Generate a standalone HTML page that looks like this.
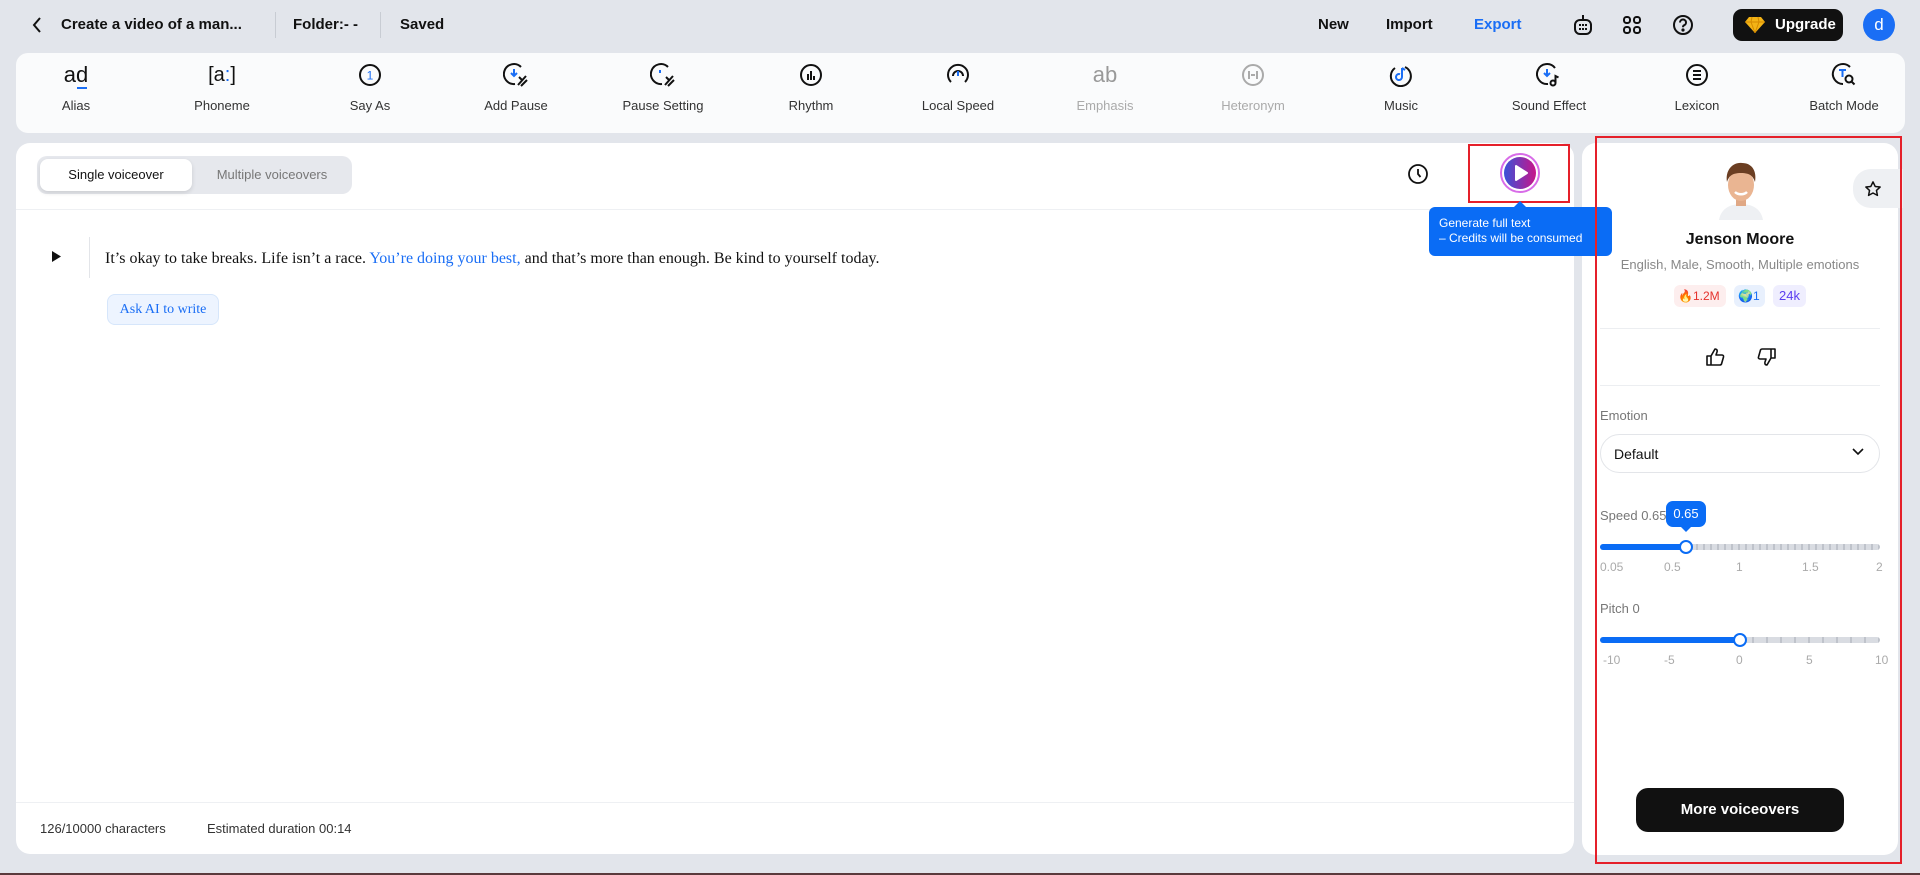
<!DOCTYPE html>
<html><head><meta charset="utf-8"><style>
*{box-sizing:border-box;margin:0;padding:0}
body{width:1920px;height:875px;background:#e2e5eb;font-family:"Liberation Sans",sans-serif;position:relative;overflow:hidden;color:#111}
.a{position:absolute}
.b{font-weight:bold}
.tool{position:absolute;top:62px;width:120px;margin-left:-60px;text-align:center}
.tool .ic{height:26px;display:flex;justify-content:center;align-items:center}
.tool .lb{font-size:13px;color:#333;margin-top:10px}
.tool.dis .lb{color:#aaa}
svg{display:block}
</style></head><body>
<!-- top bar -->
<svg class="a" style="left:31px;top:16px" width="12" height="18" viewBox="0 0 12 18"><path d="M9 2 L3 9 L9 16" fill="none" stroke="#111" stroke-width="2"/></svg>
<div class="a b" style="left:61px;top:16px;font-size:15px">Create a video of a man...</div>
<div class="a" style="left:275px;top:12px;width:1px;height:26px;background:#c8ccd3"></div>
<div class="a b" style="left:293px;top:16px;font-size:15px">Folder:- -</div>
<div class="a" style="left:380px;top:12px;width:1px;height:26px;background:#c8ccd3"></div>
<div class="a b" style="left:400px;top:16px;font-size:15px">Saved</div>
<div class="a b" style="left:1318px;top:16px;font-size:15px">New</div>
<div class="a b" style="left:1386px;top:16px;font-size:15px">Import</div>
<div class="a b" style="left:1474px;top:16px;font-size:15px;color:#1a6ef5">Export</div>
<svg class="a" style="left:1572px;top:13px" width="22" height="24" viewBox="0 0 22 24"><path d="M11 2v4" stroke="#111" stroke-width="2"/><rect x="3" y="7" width="16" height="14" rx="5" fill="none" stroke="#111" stroke-width="2"/><g fill="#111"><rect x="7" y="11" width="2" height="2"/><rect x="10" y="11" width="2" height="2"/><rect x="13" y="11" width="2" height="2"/><rect x="7" y="15" width="2" height="2"/><rect x="10" y="15" width="2" height="2"/><rect x="13" y="15" width="2" height="2"/></g></svg>
<svg class="a" style="left:1622px;top:15px" width="20" height="20" viewBox="0 0 20 20" fill="none" stroke="#111" stroke-width="2"><rect x="2" y="2" width="6" height="6" rx="2.5"/><rect x="12" y="2" width="6" height="6" rx="2.5"/><rect x="2" y="12" width="6" height="6" rx="2.5"/><rect x="12" y="12" width="6" height="6" rx="2.5"/></svg>
<svg class="a" style="left:1672px;top:14px" width="22" height="22" viewBox="0 0 22 22" fill="none" stroke="#111" stroke-width="2"><circle cx="11" cy="11" r="9"/><path d="M8 8.5a3 3 0 1 1 4 2.8c-.8.4-1 1-1 2"/><circle cx="11" cy="16" r=".6" fill="#111"/></svg>
<div class="a" style="left:1733px;top:9px;width:110px;height:32px;background:#111;border-radius:9px;color:#fff;font-size:15px;font-weight:bold;padding:7px 0 0 42px">Upgrade</div>
<svg class="a" style="left:1745px;top:16px" width="20" height="17" viewBox="0 0 20 17"><path d="M4 1h12l4 5-10 11L0 6z" fill="#f3b316"/><path d="M0 6h20M7 1l-1 5 4 11 4-11-1-5" fill="none" stroke="#d58a00" stroke-width="1"/></svg>
<div class="a" style="left:1863px;top:9px;width:32px;height:32px;border-radius:50%;background:#1a6ef5;color:#fff;font-size:17px;text-align:center;line-height:31px">d</div>

<!-- toolbar -->
<div class="a" style="left:16px;top:53px;width:1889px;height:80px;background:#fafbfc;border-radius:12px"></div>
<div class="tool" style="left:76px"><div class="ic"><span style="font-size:22px;position:relative">ad<span class="a" style="left:13px;top:25px;width:10px;height:2px;background:#1a6ef5"></span></span></div><div class="lb">Alias</div></div>
<div class="tool" style="left:222px"><div class="ic"><span style="font-size:20px">[a<span style="color:#1a6ef5">:</span>]</span></div><div class="lb">Phoneme</div></div>
<div class="tool" style="left:370px"><div class="ic"><svg width="24" height="24" viewBox="0 0 24 24"><circle cx="12" cy="12" r="10" fill="none" stroke="#111" stroke-width="2"/><text x="12" y="16.5" font-size="12" text-anchor="middle" fill="#1a6ef5" font-family="Liberation Sans">1</text></svg></div><div class="lb">Say As</div></div>
<div class="tool" style="left:516px"><div class="ic"><svg width="26" height="26" viewBox="0 0 26 26" fill="none" stroke="#111" stroke-width="2"><path d="M18 5A10 10 0 1 0 12 22"/><path d="M11 7v7M8 11l3 3 3-3" stroke="#1a6ef5"/><path d="M15 23l8-9M18 24l6-6M16 15l3 3"/></svg></div><div class="lb">Add Pause</div></div>
<div class="tool" style="left:663px"><div class="ic"><svg width="26" height="26" viewBox="0 0 26 26" fill="none" stroke="#111" stroke-width="2"><path d="M18 5A10 10 0 1 0 12 22"/><path d="M10 8v3" stroke="#1a6ef5"/><path d="M15 23l8-9M18 24l6-6M16 15l3 3"/></svg></div><div class="lb">Pause Setting</div></div>
<div class="tool" style="left:811px"><div class="ic"><svg width="24" height="24" viewBox="0 0 24 24" fill="none" stroke="#111" stroke-width="2"><circle cx="12" cy="12" r="10"/><path d="M9 11v6M12 8v9M15 13v4"/></svg></div><div class="lb">Rhythm</div></div>
<div class="tool" style="left:958px"><div class="ic"><svg width="24" height="24" viewBox="0 0 24 24" fill="none" stroke="#111" stroke-width="2"><path d="M5 19A10 10 0 1 1 19 19"/><path d="M7 13a5 5 0 0 1 10 0"/><path d="M12 13V8" stroke="#1a6ef5"/></svg></div><div class="lb">Local Speed</div></div>
<div class="tool dis" style="left:1105px"><div class="ic"><span style="font-size:22px;color:#999">ab</span></div><div class="lb">Emphasis</div></div>
<div class="tool dis" style="left:1253px"><div class="ic"><svg width="24" height="24" viewBox="0 0 24 24" fill="none" stroke="#aaa" stroke-width="2"><circle cx="12" cy="12" r="10"/><path d="M8 8v8M16 8v8M10 12h4"/></svg></div><div class="lb">Heteronym</div></div>
<div class="tool" style="left:1401px"><div class="ic"><svg width="24" height="24" viewBox="0 0 24 24" fill="none" stroke-width="2"><path d="M16 4A10 10 0 1 1 6 5" stroke="#111"/><path d="M13 5v9a3 3 0 1 1-2-2.8M13 5l3 2" stroke="#1a6ef5"/></svg></div><div class="lb">Music</div></div>
<div class="tool" style="left:1549px"><div class="ic"><svg width="26" height="26" viewBox="0 0 26 26" fill="none" stroke="#111" stroke-width="2"><path d="M19 6A10 10 0 1 0 12 22"/><path d="M11 7v7M8 11l3 3 3-3" stroke="#1a6ef5"/><circle cx="17" cy="21" r="2.5"/><path d="M19.5 21v-7l3 1.5"/></svg></div><div class="lb">Sound Effect</div></div>
<div class="tool" style="left:1697px"><div class="ic"><svg width="24" height="24" viewBox="0 0 24 24" fill="none" stroke="#111" stroke-width="2"><circle cx="12" cy="12" r="10"/><path d="M8 8h8M8 12h8M8 16h8"/></svg></div><div class="lb">Lexicon</div></div>
<div class="tool" style="left:1844px"><div class="ic"><svg width="26" height="26" viewBox="0 0 26 26" fill="none" stroke="#111" stroke-width="2"><path d="M19 5A10 10 0 1 0 12 22"/><path d="M8 8h7M11.5 8v7" stroke="#1a6ef5"/><circle cx="18" cy="17" r="3.5"/><path d="M20.5 19.5l3 3"/></svg></div><div class="lb">Batch Mode</div></div>

<!-- editor panel -->
<div class="a" style="left:16px;top:143px;width:1558px;height:711px;background:#fff;border-radius:14px"></div>
<div class="a" style="left:37px;top:156px;width:315px;height:38px;background:#e6e8ed;border-radius:10px"></div>
<div class="a" style="left:40px;top:159px;width:152px;height:32px;background:#fff;border-radius:8px;box-shadow:0 2px 5px rgba(0,0,0,.12);font-size:13px;text-align:center;line-height:32px">Single voiceover</div>
<div class="a" style="left:192px;top:159px;width:160px;height:32px;font-size:13px;text-align:center;line-height:32px;color:#777">Multiple voiceovers</div>
<div class="a" style="left:16px;top:209px;width:1558px;height:1px;background:#eef0f3"></div>
<svg class="a" style="left:1407px;top:163px" width="22" height="22" viewBox="0 0 22 22" fill="none" stroke="#111" stroke-width="1.8"><circle cx="11" cy="11" r="9"/><path d="M11 6v5l2.5 3"/></svg>
<div class="a" style="left:1468px;top:144px;width:102px;height:59px;border:2px solid #e5202a"></div>
<div class="a" style="left:1500px;top:153px;width:40px;height:40px;border-radius:50%;border:2px solid #d86ce8;padding:2px"><div style="width:100%;height:100%;border-radius:50%;background:linear-gradient(90deg,#3a52d8,#c8158a)"></div></div>
<svg class="a" style="left:1513px;top:164px" width="16" height="18" viewBox="0 0 16 18"><path d="M3 2l11 7-11 7z" fill="#fff" stroke="#fff" stroke-linejoin="round" stroke-width="2"/></svg>

<svg class="a" style="left:52px;top:251px" width="9" height="11" viewBox="0 0 9 11"><path d="M0 0l9 5.5L0 11z" fill="#111"/></svg>
<div class="a" style="left:89px;top:237px;width:1px;height:41px;background:#e3e5e9"></div>
<div class="a" style="left:105px;top:250px;font-family:'Liberation Serif',serif;font-size:16px;white-space:nowrap">It’s okay to take breaks. Life isn’t a race. <span style="color:#1a6ef5">You’re doing your best,</span> and that’s more than enough. Be kind to yourself today.</div>
<div class="a" style="left:107px;top:294px;width:112px;height:31px;background:#edf4ff;border:1px solid #d6e6fb;border-radius:8px;font-family:'Liberation Serif',serif;font-size:14px;color:#1a6ef5;text-align:center;line-height:29px">Ask AI to write</div>

<div class="a" style="left:16px;top:802px;width:1558px;height:1px;background:#eef0f3"></div>
<div class="a" style="left:40px;top:821px;font-size:13px;color:#333">126/10000 characters</div>
<div class="a" style="left:207px;top:821px;font-size:13px;color:#333">Estimated duration 00:14</div>

<!-- right panel -->
<div class="a" style="left:1582px;top:143px;width:316px;height:712px;background:#fff;border-radius:14px"></div>
<div class="a" style="left:1853px;top:169px;width:50px;height:39px;background:#eef0f3;border-radius:18px 0 0 18px"></div>
<svg class="a" style="left:1864px;top:180px" width="18" height="18" viewBox="0 0 24 24"><path d="M12 2.5l2.9 6.1 6.6.8-4.9 4.5 1.3 6.6L12 17.3l-5.9 3.2 1.3-6.6-4.9-4.5 6.6-.8z" fill="none" stroke="#111" stroke-width="2" stroke-linejoin="round"/></svg>
<svg class="a" style="left:1711px;top:158px" width="60" height="62" viewBox="0 0 60 62"><path d="M8 62c2-12 12-16 22-16s20 4 22 16z" fill="#eef0f3"/><rect x="25" y="38" width="10" height="10" fill="#e0a885"/><ellipse cx="30" cy="27" rx="13" ry="16" fill="#eab592"/><path d="M16 24c-2-12 6-20 15-19 10 0 15 8 13 19-2-6-5-9-14-9s-12 3-14 9z" fill="#6b3e22"/><path d="M24 34c3 3 9 3 12 0" stroke="#fff" stroke-width="2.5" fill="none"/></svg>
<div class="a b" style="left:1582px;width:316px;top:231px;text-align:center;font-size:16px">Jenson Moore</div>
<div class="a" style="left:1582px;width:316px;top:257px;text-align:center;font-size:13px;color:#888">English, Male, Smooth, Multiple emotions</div>
<div class="a" style="left:1674px;top:285px;width:52px;height:22px;background:#fdeeee;border-radius:6px;font-size:12px;color:#e5322d;line-height:22px;padding-left:4px">🔥1.2M</div>
<div class="a" style="left:1734px;top:285px;width:31px;height:22px;background:#e8f0fd;border-radius:6px;font-size:12px;color:#1a6ef5;line-height:22px;padding-left:4px">🌍1</div>
<div class="a" style="left:1773px;top:285px;width:33px;height:22px;background:#efeefe;border-radius:6px;font-size:13px;color:#5b3df0;line-height:22px;text-align:center">24k</div>
<div class="a" style="left:1600px;top:328px;width:280px;height:1px;background:#eceef1"></div>
<svg class="a" style="left:1705px;top:347px" width="20" height="20" viewBox="0 0 20 20" fill="none" stroke="#111" stroke-width="1.6" stroke-linejoin="round"><path d="M2 9h4v9H2zM6 9l4-7c2 0 2.5 1.5 2 3l-1 3h6c1 0 2 1 1.5 2l-2 7c-.3.7-1 1-1.8 1H6"/></svg>
<svg class="a" style="left:1757px;top:347px" width="20" height="20" viewBox="0 0 20 20" fill="none" stroke="#111" stroke-width="1.6" stroke-linejoin="round"><path d="M18 11h-4V2h4zM14 11l-4 7c-2 0-2.5-1.5-2-3l1-3H3c-1 0-2-1-1.5-2l2-7C3.8 2.3 4.5 2 5.3 2H14"/></svg>
<div class="a" style="left:1600px;top:385px;width:280px;height:1px;background:#eceef1"></div>
<div class="a" style="left:1600px;top:408px;font-size:13px;color:#777">Emotion</div>
<div class="a" style="left:1600px;top:434px;width:280px;height:39px;border:1px solid #e3e5e9;border-radius:20px;font-size:14px;padding:11px 0 0 13px">Default</div>
<svg class="a" style="left:1852px;top:448px" width="12" height="8" viewBox="0 0 12 8"><path d="M1 1l5 5 5-5" fill="none" stroke="#111" stroke-width="1.6"/></svg>
<div class="a" style="left:1600px;top:508px;font-size:13px;color:#777">Speed 0.65</div>
<div class="a" style="left:1666px;top:501px;width:40px;height:26px;background:#0a6cf5;border-radius:7px;color:#fff;font-size:13px;text-align:center;line-height:26px">0.65</div>
<div class="a" style="left:1681px;top:527px;border:5px solid transparent;border-top-color:#0a6cf5;border-bottom:0"></div>
<div class="a" style="left:1600px;top:544px;width:280px;height:6px;border-radius:3px;background:repeating-linear-gradient(90deg,#d9dce2 0 5px,#bfc3cb 5px 7px)"></div>
<div class="a" style="left:1600px;top:544px;width:86px;height:6px;border-radius:3px;background:#0a6cf5"></div>
<div class="a" style="left:1679px;top:540px;width:14px;height:14px;border-radius:50%;background:#fff;border:2px solid #0a6cf5"></div>
<div class="a" style="left:1600px;top:560px;width:286px;font-size:12px;color:#aaa">
<span class="a" style="left:0">0.05</span><span class="a" style="left:64px">0.5</span><span class="a" style="left:136px">1</span><span class="a" style="left:202px">1.5</span><span class="a" style="left:276px">2</span></div>
<div class="a" style="left:1600px;top:601px;font-size:13px;color:#777">Pitch 0</div>
<div class="a" style="left:1600px;top:637px;width:280px;height:6px;border-radius:3px;background:repeating-linear-gradient(90deg,#d9dce2 0 12px,#bfc3cb 12px 14px)"></div>
<div class="a" style="left:1600px;top:637px;width:140px;height:6px;border-radius:3px;background:#0a6cf5"></div>
<div class="a" style="left:1733px;top:633px;width:14px;height:14px;border-radius:50%;background:#fff;border:2px solid #0a6cf5"></div>
<div class="a" style="left:1600px;top:653px;width:286px;font-size:12px;color:#aaa">
<span class="a" style="left:3px">-10</span><span class="a" style="left:64px">-5</span><span class="a" style="left:136px">0</span><span class="a" style="left:206px">5</span><span class="a" style="left:275px">10</span></div>
<div class="a b" style="left:1636px;top:788px;width:208px;height:44px;background:#111;border-radius:12px;color:#fff;font-size:15px;text-align:center;line-height:44px">More voiceovers</div>

<!-- tooltip on top -->
<div class="a" style="left:1514px;top:201px;width:0;height:0;border:6px solid transparent;border-bottom-color:#0a6cf5;border-top:0"></div>
<div class="a" style="left:1429px;top:207px;width:183px;height:49px;background:#0a6cf5;border-radius:6px;color:#fff;font-size:12px;line-height:15px;padding:9px 0 0 10px;white-space:nowrap">Generate full text<br>– Credits will be consumed</div>

<div class="a" style="left:1595px;top:136px;width:307px;height:728px;border:2px solid #e5202a"></div>
<div class="a" style="left:0;top:873px;width:1920px;height:2px;background:#5a3a3c"></div>
</body></html>
